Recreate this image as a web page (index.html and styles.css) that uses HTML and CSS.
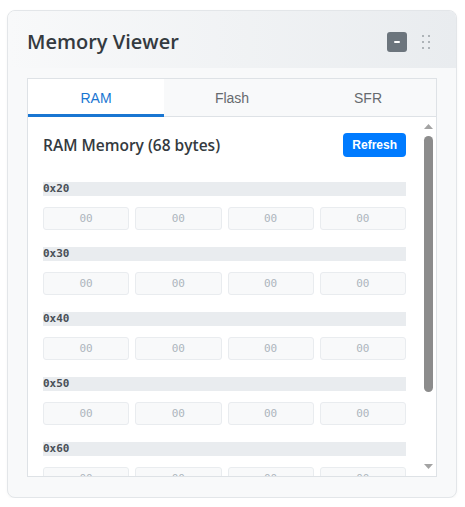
FILE: index.html
```html
<!DOCTYPE html>
<html>
<head>
<meta charset="utf-8">
<link rel="stylesheet" href="styles.css">
</head>
<body>
<div class="card">
  <div class="card-header">
    <h2 class="card-title">Memory Viewer</h2>
    <div class="controls">
      <button class="min-btn" aria-label="Minimize"><span class="minus"></span></button>
      <div class="handle">
        <span></span><span></span><span></span><span></span><span></span><span></span>
      </div>
    </div>
  </div>
  <div class="card-body">
    <div class="panel">
      <div class="tabs">
        <div class="tab active">RAM</div>
        <div class="tab">Flash</div>
        <div class="tab">SFR</div>
      </div>
      <div class="scroll-wrap">
        <div class="content">
          <div class="mem-head">
            <h3 class="mem-title">RAM Memory (68 bytes)</h3>
            <button class="refresh">Refresh</button>
          </div>
          <div class="group">
            <div class="addr">0x20</div>
            <div class="cells"><div class="cell">00</div><div class="cell">00</div><div class="cell">00</div><div class="cell">00</div></div>
          </div>
          <div class="group">
            <div class="addr">0x30</div>
            <div class="cells"><div class="cell">00</div><div class="cell">00</div><div class="cell">00</div><div class="cell">00</div></div>
          </div>
          <div class="group">
            <div class="addr">0x40</div>
            <div class="cells"><div class="cell">00</div><div class="cell">00</div><div class="cell">00</div><div class="cell">00</div></div>
          </div>
          <div class="group">
            <div class="addr">0x50</div>
            <div class="cells"><div class="cell">00</div><div class="cell">00</div><div class="cell">00</div><div class="cell">00</div></div>
          </div>
          <div class="group">
            <div class="addr">0x60</div>
            <div class="cells"><div class="cell">00</div><div class="cell">00</div><div class="cell">00</div><div class="cell">00</div></div>
          </div>
        </div>
        <div class="scrollbar">
          <svg class="arrow" width="9" height="5" viewBox="0 0 9 5"><polygon points="0,5 4.5,0 9,5" fill="#a3a3a3"/></svg>
          <div class="thumb"></div>
          <div class="spacer"></div>
          <svg class="arrow" width="9" height="5" viewBox="0 0 9 5"><polygon points="0,0 9,0 4.5,5" fill="#a3a3a3"/></svg>
        </div>
      </div>
    </div>
  </div>
</div>
</body>
</html>
```
FILE: styles.css
```css
html, body {
  margin: 0;
  padding: 0;
  background: #ffffff;
}
body {
  padding: 10px 8px 0 7px;
  font-family: "Open Sans", "Liberation Sans", sans-serif;
}
.card {
  width: 450px;
  height: 488px;
  box-sizing: border-box;
  border: 1px solid #e3e6e9;
  border-radius: 8px;
  background: #f8f9fa;
  overflow: hidden;
  display: flex;
  flex-direction: column;
  box-shadow: 0 1px 3px rgba(0,0,0,0.04);
}
.card-header {
  display: flex;
  align-items: center;
  justify-content: space-between;
  padding: 17px 26px 12px 19px;
  background: linear-gradient(90deg, #f8f9fa 0%, #e9ecef 100%);
}
.card-title {
  margin: 0;
  font-size: 20px;
  line-height: 28px;
  font-weight: 600;
  color: #343a40;
}
.controls {
  display: flex;
  align-items: center;
  gap: 15px;
}
.min-btn {
  width: 20px;
  height: 20px;
  padding: 0;
  border: none;
  border-radius: 3px;
  background: #6c757d;
  display: flex;
  align-items: center;
  justify-content: center;
}
.minus {
  width: 6px;
  height: 2px;
  background: #ffffff;
  border-radius: 1px;
}
.handle {
  display: grid;
  grid-template-columns: 2px 2px;
  grid-template-rows: 2px 2px 2px;
  column-gap: 4px;
  row-gap: 4px;
  width: 8px;
}
.handle span {
  width: 2px;
  height: 2px;
  background: #9aa0a6;
  border-radius: 1px;
}
.card-body {
  flex: 1;
  min-height: 0;
  padding: 10px 19px 20px 19px;
  display: flex;
  flex-direction: column;
}
.panel {
  flex: 1;
  border: 1px solid #dee2e6;
  background: #ffffff;
  display: flex;
  flex-direction: column;
  min-height: 0;
}
.tabs {
  display: grid;
  grid-template-columns: 1fr 1fr 1fr;
  background: #f8f9fa;
}
.tab {
  height: 38px;
  box-sizing: border-box;
  display: flex;
  align-items: center;
  justify-content: center;
  font-family: "Liberation Sans", Arial, sans-serif;
  font-size: 14px;
  color: #666a6e;
  border-bottom: 1px solid #dee2e6;
}
.tab.active {
  background: #ffffff;
  color: #1976d2;
  border-bottom: 3px solid #1976d2;
  padding-top: 2px;
}
.scroll-wrap {
  flex: 1;
  min-height: 0;
  display: flex;
}
.content {
  flex: 1;
  min-width: 0;
  overflow: hidden;
  padding: 16px 15px 0 15px;
}
.scrollbar {
  width: 15px;
  flex: none;
  display: flex;
  flex-direction: column;
  align-items: center;
  padding: 7px 0 7px 0;
  box-sizing: border-box;
}
.arrow {
  display: block;
  flex: none;
}
.thumb {
  width: 9px;
  height: 256px;
  margin-top: 7px;
  border-radius: 4.5px;
  background: #8c8c8c;
  flex: none;
}
.spacer {
  flex: 1;
}
.mem-head {
  display: flex;
  align-items: center;
  justify-content: space-between;
  margin-bottom: 25px;
}
.mem-title {
  margin: 0;
  font-size: 15.5px;
  line-height: 22px;
  font-weight: 600;
  color: #343a40;
}
.refresh {
  height: 24px;
  padding: 0 9px;
  border: none;
  border-radius: 4px;
  background: #007bff;
  color: #ffffff;
  font-family: "Liberation Sans", Arial, sans-serif;
  font-size: 12px;
  font-weight: 600;
}
.group {
  margin-bottom: 17px;
}
.addr {
  height: 14px;
  line-height: 14px;
  background: #e9ecef;
  font-family: "DejaVu Sans Mono", "Liberation Mono", monospace;
  font-size: 11px;
  font-weight: bold;
  color: #495057;
  margin-bottom: 11px;
}
.cells {
  display: grid;
  grid-template-columns: repeat(4, 1fr);
  gap: 6px;
}
.cell {
  height: 23px;
  box-sizing: border-box;
  border: 1px solid #e9ecef;
  border-radius: 3px;
  background: #f8f9fa;
  display: flex;
  align-items: center;
  justify-content: center;
  font-family: "DejaVu Sans Mono", "Liberation Mono", monospace;
  font-size: 11px;
  color: #adb5bd;
}
```
